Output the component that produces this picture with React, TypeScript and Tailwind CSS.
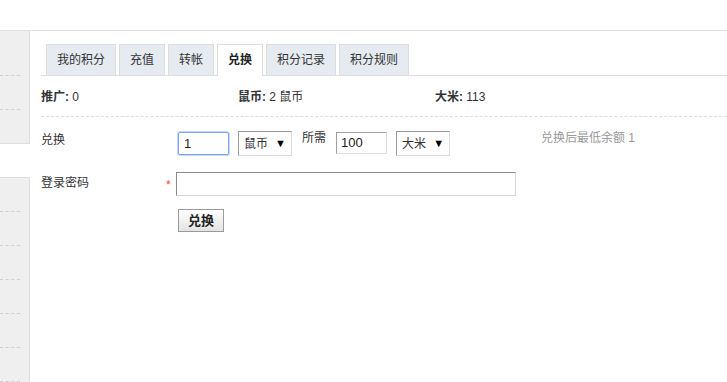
import React from "react";

const font = { fontFamily: '"Liberation Sans", "Noto Sans CJK SC", sans-serif' };

function Tab({ label, active }: { label: string; active?: boolean }) {
  return active ? (
    <div className="h-[32px] -mb-[1px] px-[10px] border border-b-0 border-[#dddddd] bg-white text-[12px] leading-[31px] font-bold text-[#222]">
      {label}
    </div>
  ) : (
    <div className="h-[31px] px-[10px] border border-b-0 border-[#dddddd] bg-[#e5ebf1] text-[12px] leading-[30px] text-[#333]">
      {label}
    </div>
  );
}

function SideItem({ h, last }: { h: string; last?: boolean }) {
  return (
    <div className={`${h} flex items-end`}>
      {!last && <div className="w-[20px] border-b border-dashed border-[#cfcfcf]" />}
    </div>
  );
}

function FakeSelect({ label }: { label: string }) {
  return (
    <div className="w-[54px] h-[25px] border border-t-[#9a9a9a] border-l-[#9a9a9a] border-r-[#dcdcdc] border-b-[#dcdcdc] bg-white flex items-center pl-[5px] pr-[5px] justify-between text-[12px] text-[#333]">
      <span>{label}</span>
      <span className="text-[11px] leading-none text-black">▼</span>
    </div>
  );
}

export default function App() {
  return (
    <div className="w-[727px] h-[382px] bg-white overflow-hidden text-[#333]" style={font}>
      <div className="h-[31px] border-b border-[#e3e3e3]" />
      <div className="flex h-[351px]">
        <div className="w-[30px] flex flex-col">
          <div className="bg-[#efefef] border-r border-b border-[#dddddd]">
            <SideItem h="h-[45px]" />
            <SideItem h="h-[34px]" />
            <SideItem h="h-[33px]" last />
          </div>
          <div className="h-[33px]" />
          <div className="flex-1 bg-[#efefef] border-r border-t border-[#dddddd]">
            <SideItem h="h-[34px]" />
            <SideItem h="h-[34px]" />
            <SideItem h="h-[34px]" />
            <SideItem h="h-[34px]" />
            <SideItem h="h-[34px]" />
            <SideItem h="h-[34px]" />
          </div>
        </div>
        <div className="flex-1 pl-[11px]">
          <div className="mt-[13px] flex items-end gap-[3px] pl-[5px] border-b border-[#dddddd] h-[32px]">
            <Tab label="我的积分" />
            <Tab label="充值" />
            <Tab label="转帐" />
            <Tab label="兑换" active />
            <Tab label="积分记录" />
            <Tab label="积分规则" />
          </div>
          <div className="h-[41px] flex items-center border-b border-dashed border-[#dddddd] text-[12px] pt-[2px]">
            <div className="w-[197px]">
              <b>推广:</b> 0
            </div>
            <div className="w-[197px]">
              <b>鼠币:</b> 2 鼠币
            </div>
            <div>
              <b>大米:</b> 113
            </div>
          </div>
          <div className="mt-[14px] flex items-start h-[25px] text-[12px]">
            <div className="w-[137px] leading-[18px]">兑换</div>
            <div className="mt-[1px] w-[51px] h-[23px] border border-[#7ea6ec] rounded-[2px] shadow-[0_0_0_1px_#c3d6f6] pl-[5px] text-[13px] leading-[21px] text-[#222]">
              1
            </div>
            <div className="ml-[9px]">
              <FakeSelect label="鼠币" />
            </div>
            <div className="ml-[10px] leading-[14px]">所需</div>
            <div className="ml-[10px] mt-[1px] w-[51px] h-[22px] border border-t-[#a0a0a0] border-l-[#a0a0a0] border-r-[#dcdcdc] border-b-[#dcdcdc] pl-[4px] text-[13px] leading-[20px] text-[#222]">
              100
            </div>
            <div className="ml-[9px]">
              <FakeSelect label="大米" />
            </div>
            <div className="ml-[91px] leading-[14px] text-[#999]">兑换后最低余额 1</div>
          </div>
          <div className="mt-[16px] flex items-start h-[24px] text-[12px]">
            <div className="w-[125px] mt-[2px] leading-[18px]">登录密码</div>
            <div className="w-[10px] text-[#f04a2a] leading-[16px] mt-[5px]">*</div>
            <div className="w-[340px] h-[24px] border border-t-[#8a8a8a] border-l-[#8a8a8a] border-r-[#d8d8d8] border-b-[#d8d8d8] bg-white" />
          </div>
          <div className="mt-[13px] ml-[137px] w-[46px] h-[23px] border border-[#9a9a9a] bg-gradient-to-b from-white to-[#e3e3e3] flex items-center justify-center text-[13px] font-bold text-[#222]">
            兑换
          </div>
        </div>
      </div>
    </div>
  );
}
